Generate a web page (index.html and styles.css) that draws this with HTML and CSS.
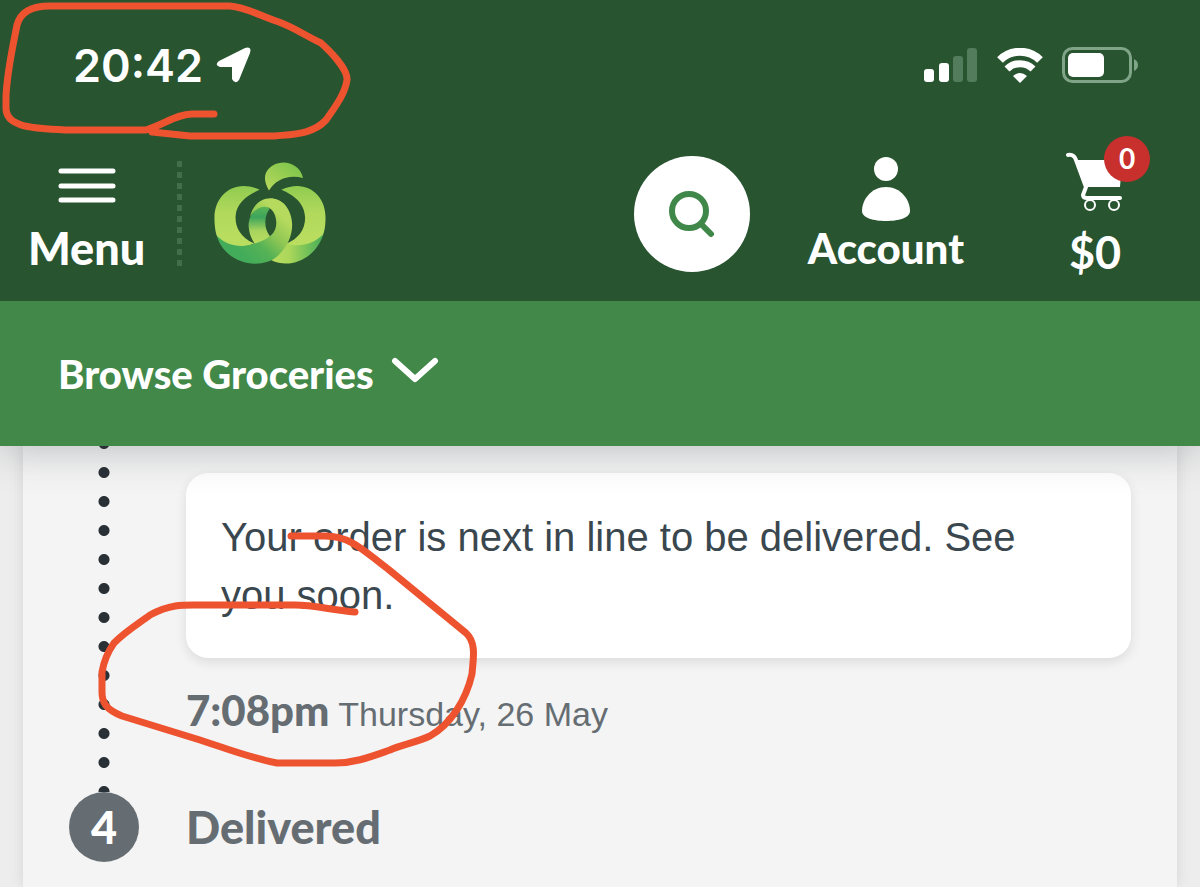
FILE: index.html
```
<!DOCTYPE html>
<html lang="en">
<head>
  <meta charset="utf-8">
  <meta name="viewport" content="width=device-width, initial-scale=1">
  <title>Track my order</title>
  <link rel="stylesheet" href="styles.css">
</head>
<body>
  <header class="header">
    <div class="status-bar">
      <div class="status-time">
        <span>20:42</span>
        <svg class="location-icon" viewBox="0 0 36 36"><path d="M3 14 L29 1 Q36 -1 34 6 L23 33 Q19 38 16 32 V20 H4 Q-2 18 3 14Z" fill="#fff"/></svg>
      </div>
      <div class="status-icons">
        <svg width="54" height="35" viewBox="0 0 54 35">
          <rect x="0" y="21" width="10" height="13" rx="3" fill="#fff"/>
          <rect x="15" y="15" width="10" height="19" rx="3" fill="#fff"/>
          <rect x="29" y="8" width="10" height="26" rx="3" fill="#527c5b"/>
          <rect x="43" y="0" width="10" height="34" rx="3" fill="#527c5b"/>
        </svg>
        <svg width="46" height="35" viewBox="0 0 46 35">
          <path d="M3 12 C14 1 32 1 43 12" fill="none" stroke="#fff" stroke-width="8"/>
          <path d="M10 21 C17 14 29 14 36 21" fill="none" stroke="#fff" stroke-width="7"/>
          <path d="M16 28 Q23 22 30 28 L23 35Z" fill="#fff"/>
        </svg>
        <svg width="77" height="36" viewBox="0 0 77 36">
          <rect x="1.500" y="1.500" width="67" height="33" rx="9" fill="none" stroke="#7fa488" stroke-width="3"/>
          <rect x="6" y="6" width="36" height="24" rx="5" fill="#fff"/>
          <path d="M72 12 Q76 14 76 18 Q76 22 72 24Z" fill="#7fa488"/>
        </svg>
      </div>
    </div>

    <div class="top-bar">
      <button class="nav-item menu-button" type="button">
        <svg width="58" height="36" viewBox="0 0 58 36">
          <path d="M3 3 H55 M3 18 H55 M3 32 H55" stroke="#fff" stroke-width="5" stroke-linecap="round"/>
        </svg>
        <span>Menu</span>
      </button>
      <div class="divider"></div>
      <a class="logo" href="#" aria-label="Home">
        <svg width="112" height="103" viewBox="42 22 334 308">
          <defs>
            <linearGradient id="leaf" x1="0" y1="1" x2="1" y2="0">
              <stop offset="0" stop-color="#b9da5c"/>
              <stop offset="1" stop-color="#76c149"/>
            </linearGradient>
            <linearGradient id="side" x1="0" y1="0" x2="0" y2="1">
              <stop offset="0" stop-color="#8fcb50"/>
              <stop offset="0.450" stop-color="#b2d95c"/>
              <stop offset="1" stop-color="#bade60"/>
            </linearGradient>
            <linearGradient id="band" gradientUnits="userSpaceOnUse" x1="140" y1="315" x2="255" y2="195">
              <stop offset="0" stop-color="#42ac5a"/>
              <stop offset="0.350" stop-color="#55b256"/>
              <stop offset="0.650" stop-color="#8dc653"/>
              <stop offset="1" stop-color="#b5da5d"/>
            </linearGradient>
            <linearGradient id="foot" x1="0" y1="0" x2="1" y2="0">
              <stop offset="0" stop-color="#bbdc60"/>
              <stop offset="0.350" stop-color="#aad75a"/>
              <stop offset="1" stop-color="#45ad58"/>
            </linearGradient>
            <linearGradient id="twist" x1="0" y1="0" x2="0" y2="1">
              <stop offset="0" stop-color="#5fb654"/>
              <stop offset="0.300" stop-color="#3ca45b"/>
              <stop offset="0.650" stop-color="#a8d45d"/>
              <stop offset="1" stop-color="#bade60"/>
            </linearGradient>
          </defs>
          <path d="M206 107 C189 80 191 56 205 42 C235 10 297 20 308 70 C265 58 226 74 206 107Z" fill="url(#leaf)"/>
          <path d="M178 105 C102 70 43 122 43 188 C43 214 46 232 51 246 C80 276 125 282 162 266 C121 248 105 218 106 185 C108 143 143 120 178 105Z" fill="url(#side)"/>
          <path d="M243 105 C318 70 376 122 375 188 C375 215 372 235 362 252 C335 280 295 285 256 267 C294 252 314 225 314 188 C313 145 279 120 243 105Z" fill="url(#side)"/>
          <path d="M256 265 C294 279 339 268 368 238 C349 306 274 345 213 316 Q240 296 256 265Z" fill="url(#foot)"/>
          <path d="M188 153 C160 160 145 185 145 213 C147 238 154 253 164 268 C182 267 198 257 209 244 C192 224 189 188 208 162 Q198 151 188 153Z" fill="url(#twist)"/>
          <path d="M149 186 C165 122 225 117 255 151 C290 195 278 262 232 303 C215 318 190 326 165 326 C110 326 62 290 50 242 C80 275 126 280 164 266 C207 252 228 235 228 203 C226 150 178 138 149 186Z" fill="url(#band)"/>
        </svg>
      </a>
      <button class="search-button" type="button" aria-label="Search">
        <svg width="48" height="48" viewBox="0 0 48 48" fill="none" stroke="#40874a" stroke-width="6" stroke-linecap="round">
          <circle cx="21" cy="21" r="17"/>
          <path d="M34 35 L43 44"/>
        </svg>
      </button>
      <a class="nav-item account-link" href="#">
        <svg width="50" height="66" viewBox="0 0 50 66" fill="#fff">
          <circle cx="25" cy="13" r="12"/>
          <path d="M25 31 C40 31 49 44 49 55 C49 62 37 65 25 65 C13 65 1 62 1 55 C1 44 10 31 25 31Z"/>
        </svg>
        <span>Account</span>
      </a>
      <a class="nav-item cart-link" href="#">
        <svg width="58" height="60" viewBox="0 0 58 60">
          <path d="M10 8 H56 L54 35 H20Z" fill="#fff"/>
          <path d="M2 3 Q8 2 10 8 L20 35 L17 43 Q17 46 21 46 H54" fill="none" stroke="#fff" stroke-width="4" stroke-linecap="round" stroke-linejoin="round"/>
          <circle cx="24" cy="53" r="5" fill="none" stroke="#fff" stroke-width="2"/>
          <circle cx="48" cy="53" r="5" fill="none" stroke="#fff" stroke-width="2"/>
        </svg>
        <span class="badge">0</span>
        <span class="cart-total">$0</span>
      </a>
    </div>
  </header>

  <nav class="browse-bar">
    <button class="browse-button" type="button">
      Browse Groceries
      <svg width="48" height="34" viewBox="0 0 48 34"><path d="M4 4 L24 22 L44 4" fill="none" stroke="#fff" stroke-width="6" stroke-linecap="round" stroke-linejoin="round"/></svg>
    </button>
  </nav>

  <main class="page">
    <section class="panel">
      <div class="step">
        <div class="track"></div>
        <div class="step-body">
          <p class="message">Your order is next in line to be delivered. See you soon.</p>
          <p class="step-date"><strong>7:08pm</strong> Thursday, 26 May</p>
        </div>
      </div>
      <div class="step">
        <div class="step-number">4</div>
        <h2 class="step-title">Delivered</h2>
      </div>
    </section>
  </main>

  <!-- pen marks around the two times -->
  <svg class="marks" width="490" height="780" viewBox="0 0 490 780" fill="none" stroke="#ee5330" stroke-width="7" stroke-linecap="round" stroke-linejoin="round">
    <path d="M214 114 H192 C177 114 165 124 146 130 H65 C35 128 6 128 6 108 V97 C7 71 13 46 17 25 C21 10 35 6 50 6 H230 C246 7 260 16 279 22 C295 28 306 36 321 43 C332 53 348 70 347 80 C345 94 335 107 326 120 C313 134 295 134 275 136 H190 L152 132"/>
    <path d="M291 536 H325 C352 536 366 553 388 569 L466 633 C477 643 473 660 472 674 C466 700 451 724 430 736 C415 743 400 745 390 750 C370 757 355 763 335 763 H277 C250 758 225 748 200 740 L122 716 C105 709 102 702 102 692 V672 C104 660 107 653 114 643 C126 631 138 624 150 615 C172 603 186 605 205 605 H295 C315 605 330 610 355 612"/>
  </svg>
</body>
</html>
```
FILE: styles.css
```
* {
  box-sizing: border-box;
}

body {
  margin: 0;
  min-height: 100vh;
  display: flex;
  flex-direction: column;
  position: relative;
  background-color: #ededed;
  font-family: "Liberation Sans", Arial, sans-serif;
}

button {
  border: none;
  background: none;
  padding: 0;
  cursor: pointer;
}

a {
  text-decoration: none;
}

svg {
  display: block;
  flex-shrink: 0;
}

/* header */
.header {
  position: relative;
  z-index: 2;
  background-color: #285430;
  color: #fff;
}

.status-bar {
  display: flex;
  align-items: center;
  justify-content: space-between;
  height: 130px;
  padding: 0 61px 0 73px;
}

.status-time {
  display: flex;
  align-items: center;
  gap: 13px;
  font-family: Inter, sans-serif;
  font-size: 45px;
  font-weight: 600;
}

.location-icon {
  width: 36px;
  height: 36px;
}

.status-icons {
  display: flex;
  align-items: center;
  gap: 19px;
}

.top-bar {
  display: flex;
  align-items: center;
  height: 171px;
  padding: 0 76px 4px 28px;
}

.nav-item {
  display: flex;
  flex-direction: column;
  align-items: center;
  justify-content: flex-end;
  height: 116px;
  color: #fff;
  font-family: Lato, sans-serif;
  font-size: 42px;
  font-weight: 900;
  line-height: 48px;
}

.menu-button {
  gap: 20px;
  font-size: 45px;
}

.divider {
  width: 5px;
  height: 106px;
  margin: 0 32px;
  background: repeating-linear-gradient(#416f49 0 6px, transparent 6px 11px);
}

.search-button {
  display: flex;
  align-items: center;
  justify-content: center;
  width: 116px;
  height: 116px;
  margin-left: auto;
  margin-right: 58px;
  border-radius: 50%;
  background-color: #fff;
}

.account-link {
  gap: 2px;
  margin-right: 102px;
}

.cart-link {
  position: relative;
  gap: 16px;
  height: 124px;
  font-size: 45px;
  font-weight: 700;
}

.badge {
  position: absolute;
  top: -16px;
  right: -26px;
  width: 46px;
  height: 46px;
  border-radius: 50%;
  background-color: #c8302e;
  font-size: 28px;
  line-height: 45px;
  text-align: center;
}

.browse-bar {
  position: relative;
  z-index: 1;
  display: flex;
  align-items: center;
  height: 145px;
  padding: 0 58px;
  background-color: #418849;
  box-shadow: 0 2px 40px rgba(40, 45, 60, 0.3);
}

.browse-button {
  display: flex;
  align-items: center;
  gap: 17px;
  color: #fff;
  font-family: Lato, sans-serif;
  font-size: 40px;
  font-weight: 900;
}

/* order tracking */
.page {
  flex: 1;
  display: flex;
  padding: 0 23px;
}

.panel {
  flex: 1;
  padding: 0 46px;
  background-color: #f4f4f4;
  box-shadow: 0 0 14px rgba(0, 0, 0, 0.1);
}

.step {
  display: grid;
  grid-template-columns: 70px 1fr;
  column-gap: 47px;
}

.track {
  background: radial-gradient(circle, #293036 5px, transparent 6px) center 12px / 12px 29px repeat-y;
}

.step-body {
  padding: 27px 0 54px;
}

.message {
  margin: 0;
  padding: 35px 60px 34px 35px;
  border-radius: 22px;
  background-color: #fff;
  box-shadow: 0 4px 12px rgba(0, 0, 0, 0.1);
  color: #3a474e;
  font-size: 40px;
  line-height: 58px;
}

.step-date {
  margin: 28px 0 0;
  color: #656d73;
  font-size: 34px;
  line-height: 48px;
}

.step-date strong {
  font-family: Lato, sans-serif;
  font-size: 42px;
  font-weight: 900;
}

.step-number {
  height: 70px;
  border-radius: 50%;
  background-color: #656d73;
  color: #fff;
  font-family: Lato, sans-serif;
  font-size: 45px;
  font-weight: 900;
  line-height: 70px;
  text-align: center;
}

.step-title {
  margin: 0;
  color: #656d73;
  font-family: Lato, sans-serif;
  font-size: 45px;
  font-weight: 900;
  line-height: 70px;
}

.marks {
  position: absolute;
  z-index: 3;
  top: 0;
  left: 0;
  pointer-events: none;
}
```
